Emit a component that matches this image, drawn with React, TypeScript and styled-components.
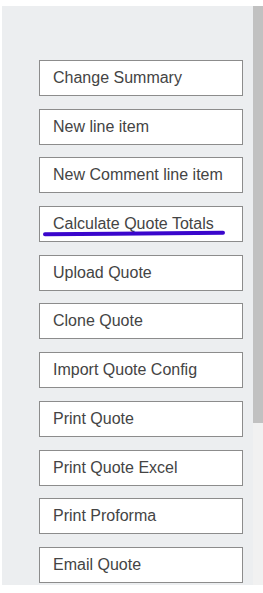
import React from "react";
import styled, { createGlobalStyle } from "styled-components";

const Global = createGlobalStyle`
  html, body { margin: 0; padding: 0; background: #ffffff; }
  body { font-family: "Liberation Sans", Arial, sans-serif; }
`;

const Frame = styled.div`
  margin: 6px 0 0 2px;
  height: 579px;
  display: flex;
`;

const Panel = styled.div`
  flex: 1;
  background: #eceef0;
  padding: 54px 0 0 37px;
  display: flex;
  flex-direction: column;
  gap: 12.7px;
  position: relative;
`;

const Scrollbar = styled.div`
  width: 10px;
  display: flex;
  flex-direction: column;
  background: #f1f1f1;
`;

const Thumb = styled.div`
  height: 417px;
  background: #c1c1c1;
`;

const ActionButton = styled.div`
  box-sizing: border-box;
  width: 204px;
  height: 36px;
  border: 1.5px solid #8c8c8c;
  background: #ffffff;
  display: flex;
  align-items: center;
  padding-left: 13px;
  font-size: 16px;
  color: #444444;
  position: relative;
`;

const Mark = styled.svg`
  position: absolute;
  left: 3px;
  top: 23px;
  overflow: visible;
`;

const items = [
  "Change Summary",
  "New line item",
  "New Comment line item",
  "Calculate Quote Totals",
  "Upload Quote",
  "Clone Quote",
  "Import Quote Config",
  "Print Quote",
  "Print Quote Excel",
  "Print Proforma",
  "Email Quote",
];

export default function App() {
  return (
    <>
      <Global />
      <Frame>
        <Panel>
          {items.map((t) => (
            <ActionButton key={t}>
              {t}
              {t === "Calculate Quote Totals" && (
                <Mark width="182" height="6">
                  <path
                    d="M2 4.2 C 60 3.8, 130 3.2, 180 2.8"
                    stroke="#3a06cc"
                    strokeWidth="4"
                    strokeLinecap="round"
                    fill="none"
                  />
                </Mark>
              )}
            </ActionButton>
          ))}
        </Panel>
        <Scrollbar>
          <Thumb />
        </Scrollbar>
      </Frame>
    </>
  );
}
